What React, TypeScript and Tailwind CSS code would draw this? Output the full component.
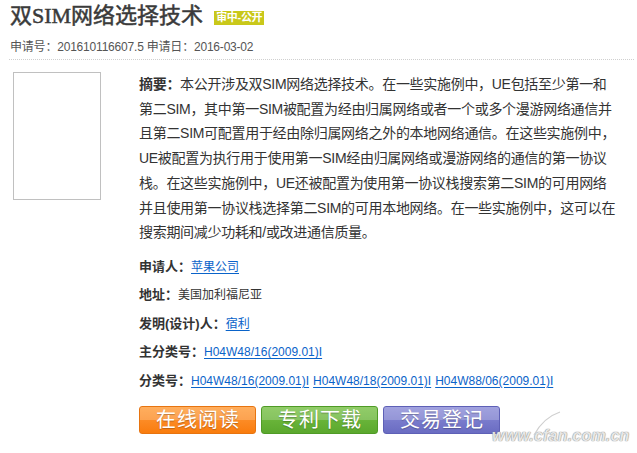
import React from "react";

const sans = "font-['Liberation_Sans','Noto_Sans_CJK_SC',sans-serif]";

function Btn({ label, cls }: { label: string; cls: string }) {
  return (
    <div
      className={`relative flex h-[28px] w-[117px] items-center justify-center overflow-hidden rounded-[3px] border text-[20px] leading-none tracking-[1px] text-white [text-shadow:0_1px_1px_rgba(0,0,0,0.25)] ${cls}`}
    >
      <div className="absolute inset-x-0 top-0 h-1/2 bg-white/20" />
      <span className="relative pl-[1px]">{label}</span>
    </div>
  );
}

export default function App() {
  const lines: React.ReactNode[] = [
    <>
      <b className="font-bold">摘要：</b>本公开涉及双SIM网络选择技术。在一些实施例中，UE包括至少第一和
    </>,
    "第二SIM，其中第一SIM被配置为经由归属网络或者一个或多个漫游网络通信并",
    "且第二SIM可配置用于经由除归属网络之外的本地网络通信。在这些实施例中，",
    "UE被配置为执行用于使用第一SIM经由归属网络或漫游网络的通信的第一协议",
    "栈。在这些实施例中，UE还被配置为使用第一协议栈搜索第二SIM的可用网络",
    "并且使用第一协议栈选择第二SIM的可用本地网络。在一些实施例中，这可以在",
    "搜索期间减少功耗和/或改进通信质量。",
  ];

  const link = "text-[#0a63c9] underline underline-offset-[2px]";

  return (
    <div className={`relative h-[453px] w-[637px] overflow-hidden bg-white ${sans} text-[#333]`}>
      <div className="pl-[9px] pr-[3px]">
        <div className="flex h-[32px] items-center pl-[1px]">
          <h1 className="font-['Liberation_Serif','Noto_Sans_CJK_SC',serif] text-[22px] font-normal leading-[32px] text-[#3a3a3a] [-webkit-text-stroke:0.5px_#3a3a3a]">
            双SIM网络选择技术
          </h1>
          <span className="ml-[11px] mt-[3px] flex h-[14px] items-center bg-[#c9c81a] px-[2px] text-[11px] font-bold leading-none tracking-[-0.3px] text-white">
            审中-公开
          </span>
        </div>
        <div className="mt-[7px] border-b border-dotted border-[#cfcfcf] pb-[4px] pl-[1px] text-[12px] leading-[16px] tracking-[-0.2px] text-[#555]">
          申请号：201610116607.5 申请日：2016-03-02
        </div>
      </div>

      <div className="mt-[12px] flex">
        <div className="ml-[13px] h-[128px] w-[88px] shrink-0 border border-[#c0c0c0]" />
        <div className="ml-[38px] flex flex-col">
          <div className="text-[14px] leading-[24.7px] tracking-[-0.3px] text-[#333]">
            {lines.map((l, i) => (
              <span key={i} className="block whitespace-nowrap">
                {l}
              </span>
            ))}
          </div>

          <div className="mt-[7.5px] flex flex-col">
            <div className="flex h-[28.5px] items-center whitespace-nowrap">
              <span className="text-[13px] font-bold">申请人：</span>
              <a className={`text-[12px] ${link}`}>苹果公司</a>
            </div>
            <div className="flex h-[28.5px] items-center whitespace-nowrap">
              <span className="text-[13px] font-bold">地址：</span>
              <span className="text-[12px]">美国加利福尼亚</span>
            </div>
            <div className="flex h-[28.5px] items-center whitespace-nowrap">
              <span className="text-[13px] font-bold">发明(设计)人：</span>
              <a className={`text-[12px] ${link}`}>宿利</a>
            </div>
            <div className="flex h-[28.5px] items-center whitespace-nowrap">
              <span className="text-[13px] font-bold">主分类号：</span>
              <a className={`text-[12px] ${link}`}>H04W48/16(2009.01)I</a>
            </div>
            <div className="flex h-[28.5px] items-center whitespace-nowrap">
              <span className="text-[13px] font-bold">分类号：</span>
              <a className={`text-[12px] ${link}`}>H04W48/16(2009.01)I</a>
              <a className={`ml-[4px] text-[12px] ${link}`}>H04W48/18(2009.01)I</a>
              <a className={`ml-[4px] text-[12px] ${link}`}>H04W88/06(2009.01)I</a>
            </div>
          </div>

          <div className="mt-[11px] flex gap-[5px]">
            <Btn label="在线阅读" cls="border-[#e77410] bg-gradient-to-b from-[#ff9a35] to-[#f97c0c]" />
            <Btn label="专利下载" cls="border-[#4f9b26] bg-gradient-to-b from-[#76c043] to-[#5ba82e]" />
            <Btn label="交易登记" cls="border-[#5e60b6] bg-gradient-to-b from-[#8a8bd7] to-[#6a6cc2]" />
          </div>
        </div>
      </div>

      <div className="pointer-events-none absolute left-[492px] top-[428px] flex items-end">
        <span className="font-['Liberation_Sans',sans-serif] text-[16px] font-bold italic leading-none tracking-[0.2px] text-[#e6e6e6] [text-shadow:0_0_1px_#8a8a8a,0_0_1px_#8a8a8a]">
          www.cfan.com.cn
        </span>
        <svg className="absolute left-[40px] top-[-18px]" width="30" height="26" viewBox="0 0 30 26">
          <path d="M2 25 C 8 14, 16 6, 28 2" stroke="#cfcfcf" strokeWidth="1.2" fill="none" />
        </svg>
      </div>
    </div>
  );
}
